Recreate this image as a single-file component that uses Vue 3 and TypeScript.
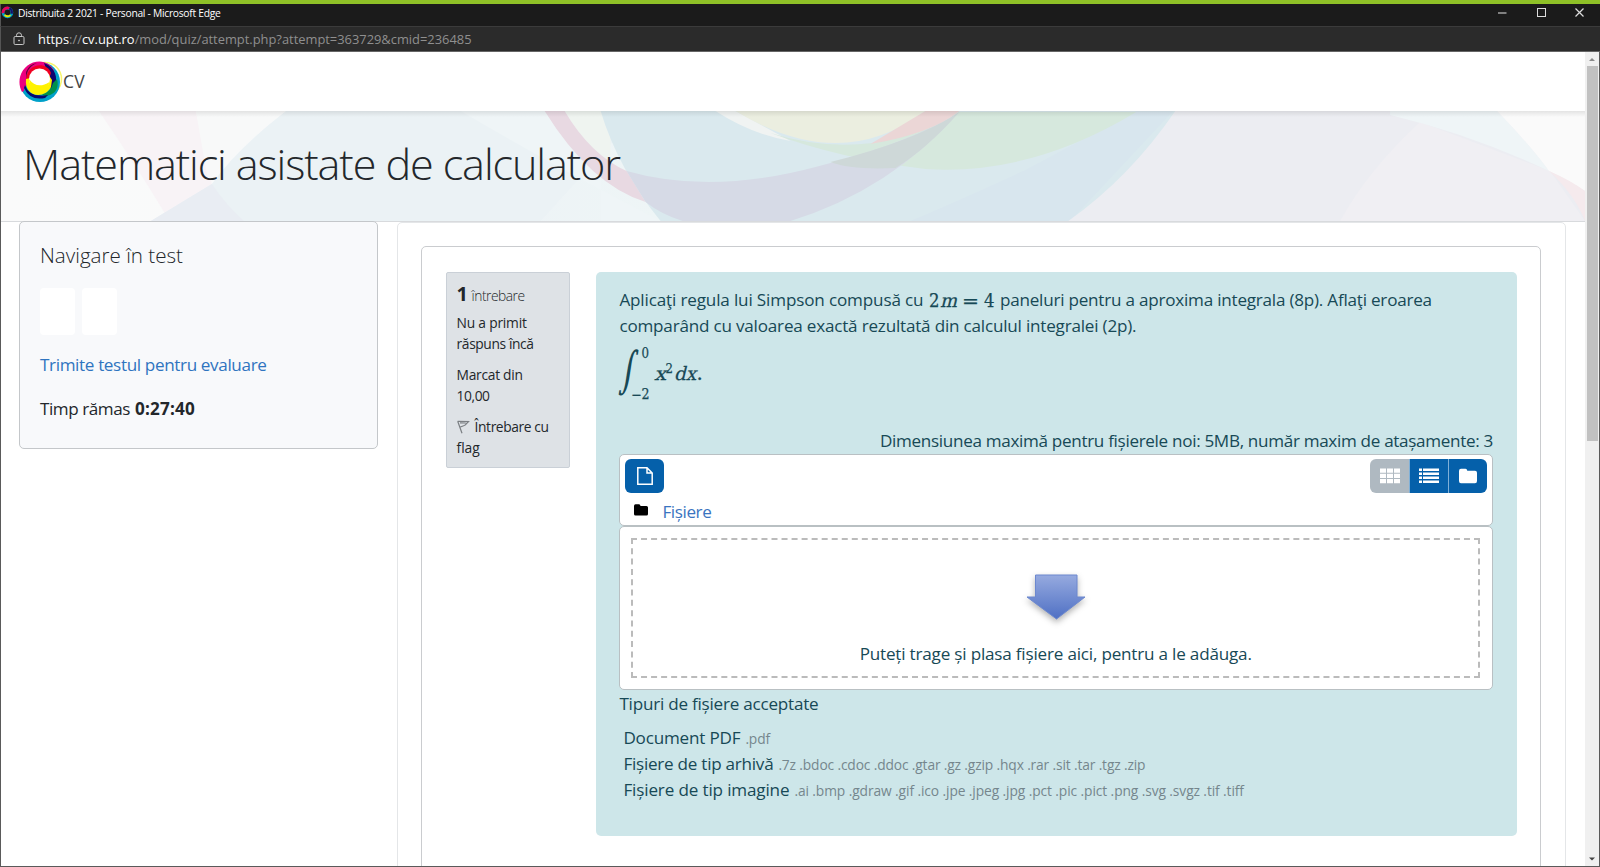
<script setup lang="ts">
import type { Directive } from 'vue'

// Tunes letter spacing so a line of text takes the given advance width.
const vFit: Directive<HTMLElement, number> = {
  mounted(el, { value }) {
    const count = (el.textContent ?? '').trim().length
    const width = el.getBoundingClientRect().width
    el.style.letterSpacing = `${(value - width) / count}px`
  },
}

interface FileType {
  label: string
  labelWidth: number
  extensions: string
  extensionsWidth: number
}

const fileTypes: FileType[] = [
  { label: 'Document PDF', labelWidth: 117, extensions: '.pdf', extensionsWidth: 24.5 },
  {
    label: 'Fișiere de tip arhivă',
    labelWidth: 150,
    extensions: '.7z .bdoc .cdoc .ddoc .gtar .gz .gzip .hqx .rar .sit .tar .tgz .zip',
    extensionsWidth: 367,
  },
  {
    label: 'Fișiere de tip imagine',
    labelWidth: 166,
    extensions: '.ai .bmp .gdraw .gif .ico .jpe .jpeg .jpg .pct .pic .pict .png .svg .svgz .tif .tiff',
    extensionsWidth: 449.5,
  },
]
</script>

<template>
  <div class="window">
    <div class="accent"></div>
    <header class="titlebar">
      <svg class="favicon" viewBox="0 0 44 44">
        <circle cx="22" cy="22" r="15" fill="none" stroke="#00a0c6" stroke-width="9" />
        <path d="M7 24A15 15 0 0 1 28 8" fill="none" stroke="#e8005a" stroke-width="9" />
        <path d="M28 8A15 15 0 0 1 36 26" fill="none" stroke="#17106b" stroke-width="7" />
        <path d="M12 30A14 14 0 0 0 32 31" fill="none" stroke="#e8e800" stroke-width="6" />
      </svg>
      <span v-fit="202.5" class="window-title">Distribuita 2 2021 - Personal - Microsoft Edge</span>
      <svg class="controls" viewBox="0 0 100 22">
        <path d="M7 9H15.500" stroke="#9a9a9a" stroke-width="1.6" />
        <rect x="46.500" y="4.500" width="8" height="8" fill="none" stroke="#ddd" stroke-width="1" />
        <path d="M84.500 4.500l8 8m0-8l-8 8" stroke="#ddd" stroke-width="1.2" />
      </svg>
    </header>
    <div class="urlbar">
      <svg class="lock" viewBox="0 0 12 14" fill="none" stroke="#c9c9c9" stroke-width="1">
        <rect x="1" y="4.500" width="10" height="8" rx="1.200" />
        <path d="M3.500 4.500V3.300a2.500 2.500 0 0 1 5 0V4.500" />
        <circle cx="6" cy="8.500" r=".5" fill="#c9c9c9" />
      </svg>
      <span v-fit="433.5" class="url"><b>https</b>://<b>cv.upt.ro</b>/mod/quiz/attempt.php?attempt=363729&amp;cmid=236485</span>
    </div>

    <div class="viewport">
      <div class="page">
        <nav class="navbar">
          <svg class="logo" viewBox="0 0 46 44">
            <circle cx="27" cy="20" r="16.500" fill="none" stroke="#f8f56a" stroke-width="1.500" />
            <circle cx="22" cy="23" r="20" fill="#00a1c9" />
            <path d="M4 33C-2 22 3 8 15 3.500c10-3 17 1 21 8L32 24 10 26Q6 27 6 32Z" fill="#ed0080" />
            <path d="M26 4C37 8 41 19 36 28L29 31 30 15Z" fill="#10056f" />
            <path d="M39 20C42 31 35 37 26 37L24 35Q33 33 35 24Z" fill="#00914a" />
            <path d="M7 26Q11 39 30 36L27 39Q12 42 6 29Z" fill="#06096f" />
            <path d="M8 22C8 5 28 1 33 14L30 22 10 24Z" fill="#f00020" />
            <path d="M8 22Q8 8 19 4Q11 5 8 13Z" fill="#6a0038" />
            <path d="M8 20C6 38 26 41 33 28L34 21 30 15Z" fill="#fff200" />
            <circle cx="21.500" cy="20" r="10.500" fill="#fff" />
            <path d="M11 20Q19 31 31.500 23Q29 33 20 33Q12 31 11 20Z" fill="#fff200" />
          </svg>
          <span v-fit="22" class="brand">CV</span>
        </nav>

        <div class="hero">
          <svg class="hero-art" viewBox="0 111 1585 110" preserveAspectRatio="none">
            <defs>
              <linearGradient id="heroBase" x1="0" x2="1">
                <stop offset="0" stop-color="#fafafa" />
                <stop offset=".13" stop-color="#f9fafa" />
                <stop offset=".3" stop-color="#edf3f6" />
                <stop offset=".42" stop-color="#eef5f6" />
              </linearGradient>
              <linearGradient id="heroShade" x1="0" x2="0" y1="0" y2="1">
                <stop offset="0" stop-color="#000" stop-opacity=".09" />
                <stop offset="1" stop-color="#000" stop-opacity="0" />
              </linearGradient>
            </defs>
            <rect y="111" width="1585" height="110" fill="url(#heroBase)" />
            <path d="M98 111H195L211 184L165 215Q135 165 98 111Z" fill="#f8f3f6" />
            <path d="M285 111Q235 150 211 184L150 221H540L640 111Z" fill="#ebf2f5" />
            <path d="M150 221L211 184Q225 205 243 221Z" fill="#e9edf3" />
            <path d="M195 111H285Q235 150 207 180Z" fill="#f8f9f9" />
            <path d="M460 111H600V221H660Q560 170 460 111Z" fill="#eff5f7" />
            <path d="M564 111H610V172H626Q590 155 564 111Z" fill="#eff4f0" />
            <path d="M600 111Q618 170 660 221H1400V111Z" fill="#dae9ee" />
            <path d="M1025 170Q960 200 910 221H1070L1173 111H1136Z" fill="#d8e6ee" />
            <path d="M715 111Q750 134 790 141L735 111Z" fill="#f0f3f2" />
            <path d="M735 111Q840 175 925 111Z" fill="#ebeee0" />
            <path d="M770 133Q820 149 872 143L958 112H1136Q1030 176 925 169Q840 159 770 133Z" fill="#d6e8dd" />
            <path d="M544 111Q590 185 645 202L626 171Q590 155 564 111Z" fill="#e8d9e2" />
            <path d="M626 171Q710 195 815 167Q910 143 959 112Q890 190 790 221H682Q660 214 645 202Z" fill="#d6dae6" />
            <path d="M830 162Q915 141 959 112Q925 150 895 168Q850 170 830 162Z" fill="#ced8d8" />
            <path d="M925 111H959Q930 134 870 144Z" fill="#ebd6d6" />
            <path d="M1175 111Q1130 177 1068 221H1585V111Z" fill="#ecedf2" />
            <path d="M1420 122Q1368 170 1340 221H1585L1550 171Z" fill="#f0eff3" />
            <path d="M1390 111H1497Q1530 145 1549 171Q1470 134 1390 115Z" fill="#eff5f7" />
            <path d="M1497 111H1585V191Q1565 179 1549 171Q1530 145 1497 111Z" fill="#fafafa" />
            <path d="M1549 171Q1570 180 1585 191V221Q1575 195 1549 171Z" fill="#f5eaed" />
            <rect y="111" width="1585" height="6" fill="url(#heroShade)" />
          </svg>
          <h1 v-fit="597">Matematici asistate de calculator</h1>
        </div>

        <div class="columns">
          <aside class="block">
            <h5 v-fit="143">Navigare în test</h5>
            <div class="qn-buttons"><i></i><i></i></div>
            <a v-fit="226.5" class="finish">Trimite testul pentru evaluare</a>
            <p class="timer"><span v-fit="90">Timp rămas</span><b v-fit="60">0:27:40</b></p>
          </aside>

          <main class="region">
            <section class="question">
              <div class="info">
                <p class="number"><b>1</b><span v-fit="53">întrebare</span></p>
                <p><span v-fit="70">Nu a primit</span><br /><span v-fit="77">răspuns încă</span></p>
                <p><span v-fit="66">Marcat din</span><br /><span v-fit="33">10,00</span></p>
                <p>
                  <svg class="flag" viewBox="0 0 13 14" fill="none" stroke="#7b7f83" stroke-width="1.200">
                    <path d="M.7 1.300L5 13.300M.7 1.300L11.500 1.500Q9 4 8.500 4.800T3.300 7M3 2.800L8.800 3" />
                  </svg><span v-fit="74">Întrebare cu</span><br /><span v-fit="23">flag</span>
                </p>
              </div>

              <div class="formulation">
                <div class="qtext">
                  <div class="line first">
                    <span v-fit="304">Aplicaţi regula lui Simpson compusă cu</span>
                    <svg class="inline-math" viewBox="0 0 66 26">
                      <text class="m" x="0" y="20" font-size="18.500" textLength="10.500" lengthAdjust="spacingAndGlyphs">2</text>
                      <text class="m it" x="11" y="20" font-size="18.500" textLength="17" lengthAdjust="spacingAndGlyphs">m</text>
                      <text class="m" x="33.500" y="20" font-size="18.500" textLength="16" lengthAdjust="spacingAndGlyphs">=</text>
                      <text class="m" x="55" y="20" font-size="18.500" textLength="10.500" lengthAdjust="spacingAndGlyphs">4</text>
                    </svg>
                    <span v-fit="432">paneluri pentru a aproxima integrala (8p). Aflaţi eroarea</span>
                  </div>
                  <div class="line"><span v-fit="517">comparând cu valoarea exactă rezultată din calculul integralei (2p).</span></div>
                  <svg class="integral" viewBox="0 0 104 60">
                    <text class="m int" transform="translate(3 41.500) skewX(-9) scale(.7 1)">∫</text>
                    <text class="m" x="26.500" y="15.500" font-size="14" textLength="7.500" lengthAdjust="spacingAndGlyphs">0</text>
                    <text class="m" x="16.500" y="56.500" font-size="14" textLength="18" lengthAdjust="spacingAndGlyphs">−2</text>
                    <text class="m it" x="39" y="38" font-size="18.500" textLength="12" lengthAdjust="spacingAndGlyphs">x</text>
                    <text class="m" x="50.500" y="30.500" font-size="13" textLength="7.500" lengthAdjust="spacingAndGlyphs">2</text>
                    <text class="m it" x="59" y="38" font-size="18.500" textLength="22" lengthAdjust="spacingAndGlyphs">dx</text>
                    <text class="m" x="81.500" y="38" font-size="20">.</text>
                  </svg>
                </div>

                <p class="limits"><span v-fit="613">Dimensiunea maximă pentru fișierele noi: 5MB, număr maxim de atașamente: 3</span></p>

                <div class="toolbar">
                  <div class="buttons">
                    <button class="btn add">
                      <svg viewBox="0 0 16 18" fill="none" stroke="#fff" stroke-width="1.500">
                        <path d="M.8.800H10L15.200 6V17.200H.8Z M10 .8V6H15.200" />
                      </svg>
                    </button>
                    <div class="group">
                      <button class="btn grey">
                        <svg viewBox="0 0 20 16" fill="#fff">
                          <path d="M0 .5h6v4.300H0zM7 .5h6v4.300H7zM14 .5h6v4.300h-6zM0 5.700h6V10H0zM7 5.700h6V10H7zM14 5.700h6V10h-6zM0 11h6v4.300H0zM7 11h6v4.300H7zM14 11h6v4.300h-6z" />
                        </svg>
                      </button>
                      <button class="btn">
                        <svg viewBox="0 0 20 16" fill="#fff">
                          <path d="M0 .5h3V3H0zM4 .5h16V3H4zM0 4.500h3V7H0zM4 4.500h16V7H4zM0 8.500h3V11H0zM4 8.500h16V11H4zM0 12.500h3V15H0zM4 12.500h16V15H4z" />
                        </svg>
                      </button>
                      <button class="btn">
                        <svg viewBox="0 0 20 16" fill="#fff">
                          <path d="M1 3Q1 .8 3 .8H7.500Q9 .8 9.300 2.800H17Q19 2.800 19 4.800V13Q19 15.200 17 15.200H3Q1 15.200 1 13Z" />
                        </svg>
                      </button>
                    </div>
                  </div>
                  <div class="crumb">
                    <svg viewBox="0 0 14 12"><path d="M0 2Q0 .3 1.500.3H5Q6.300.3 6.500 2H12.500Q14 2 14 3.500V10Q14 11.600 12.500 11.600H1.500Q0 11.600 0 10Z" /></svg>
                    <a v-fit="49">Fișiere</a>
                  </div>
                </div>

                <div class="dropzone">
                  <div class="dashed">
                    <svg class="arrow" viewBox="0 0 66 56">
                      <defs>
                        <linearGradient id="arrowFill" x1="0" x2="0" y1="0" y2="1">
                          <stop offset="0" stop-color="#96aadf" />
                          <stop offset="1" stop-color="#4f70c4" />
                        </linearGradient>
                      </defs>
                      <path d="M12.500 4H54V26H62L33.500 48L4 26H12.500Z" fill="url(#arrowFill)" stroke="#6c88cf" />
                    </svg>
                    <span v-fit="392">Puteți trage și plasa fișiere aici, pentru a le adăuga.</span>
                  </div>
                </div>

                <p class="types-title"><span v-fit="199">Tipuri de fișiere acceptate</span></p>
                <ul class="types">
                  <li v-for="type in fileTypes" :key="type.label">
                    <span v-fit="type.labelWidth">{{ type.label }}</span>
                    <small v-fit="type.extensionsWidth">{{ type.extensions }}</small>
                  </li>
                </ul>
              </div>
            </section>
          </main>
        </div>
      </div>

      <div class="scrollbar">
        <svg viewBox="0 0 13 14"><path d="M3.500 9L6.500 6L9.500 9Z" fill="#8a8a8a" /></svg>
        <div class="thumb"></div>
        <svg class="down" viewBox="0 0 13 14"><path d="M3.500 5.500L6.500 8.500L9.500 5.500Z" fill="#444" /></svg>
      </div>
    </div>
  </div>
</template>

<style>
html,
body {
  margin: 0;
  overflow: hidden;
}
</style>

<style scoped>
* {
  box-sizing: border-box;
}
p,
h1,
h5,
ul {
  margin: 0;
  padding: 0;
}
.window {
  display: flex;
  flex-direction: column;
  width: 1600px;
  height: 867px;
  overflow: hidden;
  background: #fff;
  color: #23272b;
  font: 17.1px/26px 'Open Sans', 'Noto Sans', sans-serif;
  white-space: nowrap;
}
.window span,
.window small {
  display: inline-block;
}
.accent {
  flex: none;
  height: 4px;
  background: #8fc127;
}
.titlebar {
  flex: none;
  display: flex;
  height: 23px;
  background: #1b1b1b;
  border-bottom: 1px solid #3b3b3b;
  border-left: 1px solid #555;
}
.favicon {
  width: 13px;
  height: 13px;
  margin: 2px 4px 0 0;
}
.window-title {
  font-size: 10.3px;
  line-height: 18px;
  color: #fff;
}
.controls {
  width: 100px;
  height: 22px;
  margin-left: auto;
  margin-right: 9px;
}
.urlbar {
  flex: none;
  display: flex;
  height: 25px;
  padding-left: 11px;
  background: #2b2b2b;
  border-bottom: 1px solid #666;
  border-left: 1px solid #555;
}
.lock {
  width: 12px;
  height: 14px;
  margin: 5px 13px 0 1px;
}
.url {
  font-size: 12.9px;
  line-height: 25px;
  color: #8f8f8f;
}
.url b {
  font-weight: 400;
  color: #fff;
}
.viewport {
  flex: 1;
  display: flex;
  min-height: 0;
  border: solid #5a5a5a;
  border-width: 0 1px 1px;
}
.page {
  flex: 1;
  min-width: 0;
  overflow: hidden;
}
.scrollbar {
  flex: none;
  display: flex;
  flex-direction: column;
  width: 14px;
  background: #f0f0f0;
}
.scrollbar svg {
  width: 14px;
  height: 14px;
}
.scrollbar .down {
  margin-top: auto;
}
.thumb {
  width: 11px;
  height: 375px;
  margin: 0 auto;
  background: #c1c1c1;
}
.navbar {
  display: flex;
  height: 59px;
  padding: 7px 0 0 17px;
}
.logo {
  width: 46px;
  height: 44px;
}
.brand {
  margin-left: -1px;
  font-size: 17.5px;
  line-height: 45px;
  color: #444;
}
.hero {
  display: grid;
  height: 111px;
  border-bottom: 1px solid #d8dadd;
}
.hero > * {
  grid-area: 1 / 1;
}
.hero-art {
  width: 100%;
  height: 110px;
}
h1 {
  position: relative;
  justify-self: start;
  margin-left: 22px;
  font-size: 43.2px;
  line-height: 105px;
  font-weight: 300;
}
.columns {
  display: flex;
  align-items: flex-start;
}
.block {
  flex: none;
  width: 359px;
  height: 228px;
  margin: -1px 19px 0 18px;
  padding: 19px 20px;
  position: relative;
  background: #f8f9fb;
  border: 1px solid #c4c7ca;
  border-radius: 5px;
}
h5 {
  display: inline-block;
  font-size: 20.6px;
  line-height: 29px;
  font-weight: 300;
}
.qn-buttons {
  display: flex;
  gap: 7px;
  height: 47px;
  margin-top: 18px;
}
.qn-buttons i {
  width: 35px;
  height: 47px;
  background: #fff;
  border-radius: 4px;
}
.finish {
  display: inline-block;
  margin-top: 17px;
  color: #2f74c0;
}
.timer {
  margin-top: 18px;
}
.timer b {
  display: inline-block;
  margin-left: 5px;
}
.region {
  flex: 1;
  height: 645px;
  margin-right: 19px;
  padding: 23px 24px 0 23px;
  border: 1px solid #e4e6e8;
  border-radius: 5px 5px 0 0;
}
.question {
  display: flex;
  align-items: flex-start;
  justify-content: space-between;
  height: 640px;
  padding: 25px 23px 0 24px;
  border: 1px solid #cacccf;
  border-radius: 5px;
}
.info {
  width: 124px;
  height: 196px;
  padding: 9px 9.6px;
  background: #dee2e6;
  border: 1px solid #cad0d7;
  border-radius: 2px;
  font-size: 13.8px;
  line-height: 21px;
}
.info p {
  margin-bottom: 10px;
}
.info .number {
  height: 25px;
  margin-bottom: 5px;
  line-height: 23px;
}
.number b {
  display: inline-block;
  width: 15px;
  font-size: 20px;
}
.number span {
  font-weight: 300;
}
.flag {
  width: 13px;
  height: 14px;
  margin-right: 5px;
  vertical-align: -2px;
}
.formulation {
  width: 921px;
  height: 564px;
  padding: 15px 24px 0 23.4px;
  background: #cde6e9;
  border-radius: 5px;
  color: #174956;
}
.qtext {
  height: 141px;
}
.line {
  height: 26px;
}
.first {
  display: flex;
}
.inline-math {
  width: 66px;
  height: 26px;
  margin: 0 4.5px 0 6px;
}
.m {
  font-family: 'DejaVu Math TeX Gyre', 'Liberation Serif', serif;
  fill: #174956;
  stroke: #174956;
  stroke-width: 0.25px;
}
.it {
  font-style: italic;
}
.int {
  font-size: 42px;
  stroke-width: 0;
}
.integral {
  display: block;
  width: 104px;
  height: 60px;
  margin: 3px 0 0 -4px;
}
.limits {
  height: 26px;
  text-align: right;
}
.toolbar {
  height: 72px;
  padding: 4px 5px 0;
  background: #fff;
  border: 1px solid #b9c0c3;
  border-radius: 5px;
}
.buttons {
  display: flex;
  justify-content: space-between;
  height: 34px;
}
.group {
  display: flex;
  overflow: hidden;
  border-radius: 6px;
}
.btn {
  display: flex;
  align-items: center;
  justify-content: center;
  width: 39px;
  height: 34px;
  padding: 0;
  border: 0;
  background: #0560aa;
}
.group .btn + .btn {
  border-left: 1px solid #7fb0d8;
}
.group .btn svg {
  width: 20px;
  height: 16px;
}
.group .btn.grey {
  background: #afb9c1;
}
.add {
  border-radius: 6px;
}
.add svg {
  width: 16px;
  height: 18px;
}
.crumb {
  display: flex;
  padding: 6px 0 0 9px;
}
.crumb svg {
  width: 14px;
  height: 12px;
  margin: 5px 14px 0 0;
}
.crumb a {
  display: inline-block;
  color: #3a74c0;
}
.dropzone {
  height: 164px;
  padding: 11px 12px 11px 11px;
  background: #fff;
  border: 1px solid #b9c0c3;
  border-radius: 5px;
}
.dashed {
  display: flex;
  flex-direction: column;
  align-items: center;
  height: 140px;
  padding-top: 31px;
  border: 2px dashed #bbb;
}
.arrow {
  width: 66px;
  height: 56px;
  margin-bottom: 14px;
  filter: drop-shadow(0 3px 3px rgba(0, 0, 0, 0.3));
}
.types-title {
  height: 35px;
  padding-top: 1px;
}
.types {
  padding-left: 4px;
  list-style: none;
}
.types li {
  display: flex;
  gap: 5px;
  height: 26px;
}
.types small {
  font-size: 13.8px;
  line-height: 28px;
  color: #75868d;
}
</style>
